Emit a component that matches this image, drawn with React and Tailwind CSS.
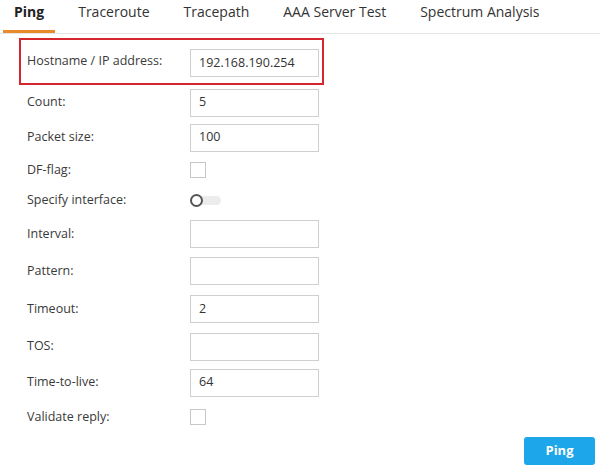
import React from "react";

const tabs = ["Ping", "Traceroute", "Tracepath", "AAA Server Test", "Spectrum Analysis"];

function TextRow({ label, value, h }) {
  return (
    <div className={`flex items-center ${h}`}>
      <div className="w-[190px] pl-[27px] text-[12.5px] text-[#3a3a3a]">{label}</div>
      <div className="w-[129px] h-[28px] border border-[#cfcfcf] bg-white flex items-center px-[8px] text-[12.5px] text-[#333]">
        {value}
      </div>
    </div>
  );
}

function CheckRow({ label, h }) {
  return (
    <div className={`flex items-center ${h}`}>
      <div className="w-[190px] pl-[27px] text-[12.5px] text-[#3a3a3a]">{label}</div>
      <div className="w-[16px] h-[16px] border border-[#c8c8c8] bg-white" />
    </div>
  );
}

export default function App() {
  return (
    <div className="w-[600px] h-[469px] bg-white font-['Open_Sans',sans-serif] overflow-hidden">
      <div className="flex h-[34px] border-b border-[#e6e6e6] pl-[3px] gap-[12px]">
        {tabs.map((t, i) => (
          <div
            key={t}
            className={`px-[11px] pt-[1px] text-[14px] border-b-[3px] ${
              i === 0 ? "font-bold text-[#222] border-[#e8892b]" : "text-[#333] border-transparent"
            }`}
          >
            {t}
          </div>
        ))}
      </div>

      <div className="mt-[4px] ml-[19px] w-[305px] h-[47px] border-2 border-[#d7252f] flex items-center">
        <div className="w-[169px] pl-[6px] text-[12.5px] text-[#3a3a3a]">Hostname / IP address:</div>
        <div className="w-[129px] h-[28px] mt-[3px] border border-[#cfcfcf] bg-white flex items-center px-[8px] text-[12.5px] text-[#333]">
          192.168.190.254
        </div>
      </div>

      <TextRow label="Count:" value="5" h="h-[35px]" />
      <TextRow label="Packet size:" value="100" h="h-[35px]" />
      <CheckRow label="DF-flag:" h="h-[30px]" />
      <div className="flex items-center h-[31px]">
        <div className="w-[190px] pl-[27px] text-[12.5px] text-[#3a3a3a]">Specify interface:</div>
        <div className="relative w-[32px] h-[13px]">
          <div className="absolute left-[4px] top-[2px] w-[27px] h-[9px] rounded-full bg-[#ececec]" />
          <div className="absolute left-0 top-0 w-[13px] h-[13px] rounded-full border-2 border-[#555] bg-white" />
        </div>
      </div>
      <TextRow label="Interval:" value="" h="h-[36px]" />
      <TextRow label="Pattern:" value="" h="h-[38px]" />
      <TextRow label="Timeout:" value="2" h="h-[38px]" />
      <TextRow label="TOS:" value="" h="h-[37px]" />
      <TextRow label="Time-to-live:" value="64" h="h-[35px]" />
      <CheckRow label="Validate reply:" h="h-[34px]" />

      <div className="flex justify-end pr-[5px] mt-[3px]">
        <button className="w-[71px] h-[28px] rounded-[3px] bg-[#1ea6ea] text-white font-bold text-[13px]">
          Ping
        </button>
      </div>
    </div>
  );
}
